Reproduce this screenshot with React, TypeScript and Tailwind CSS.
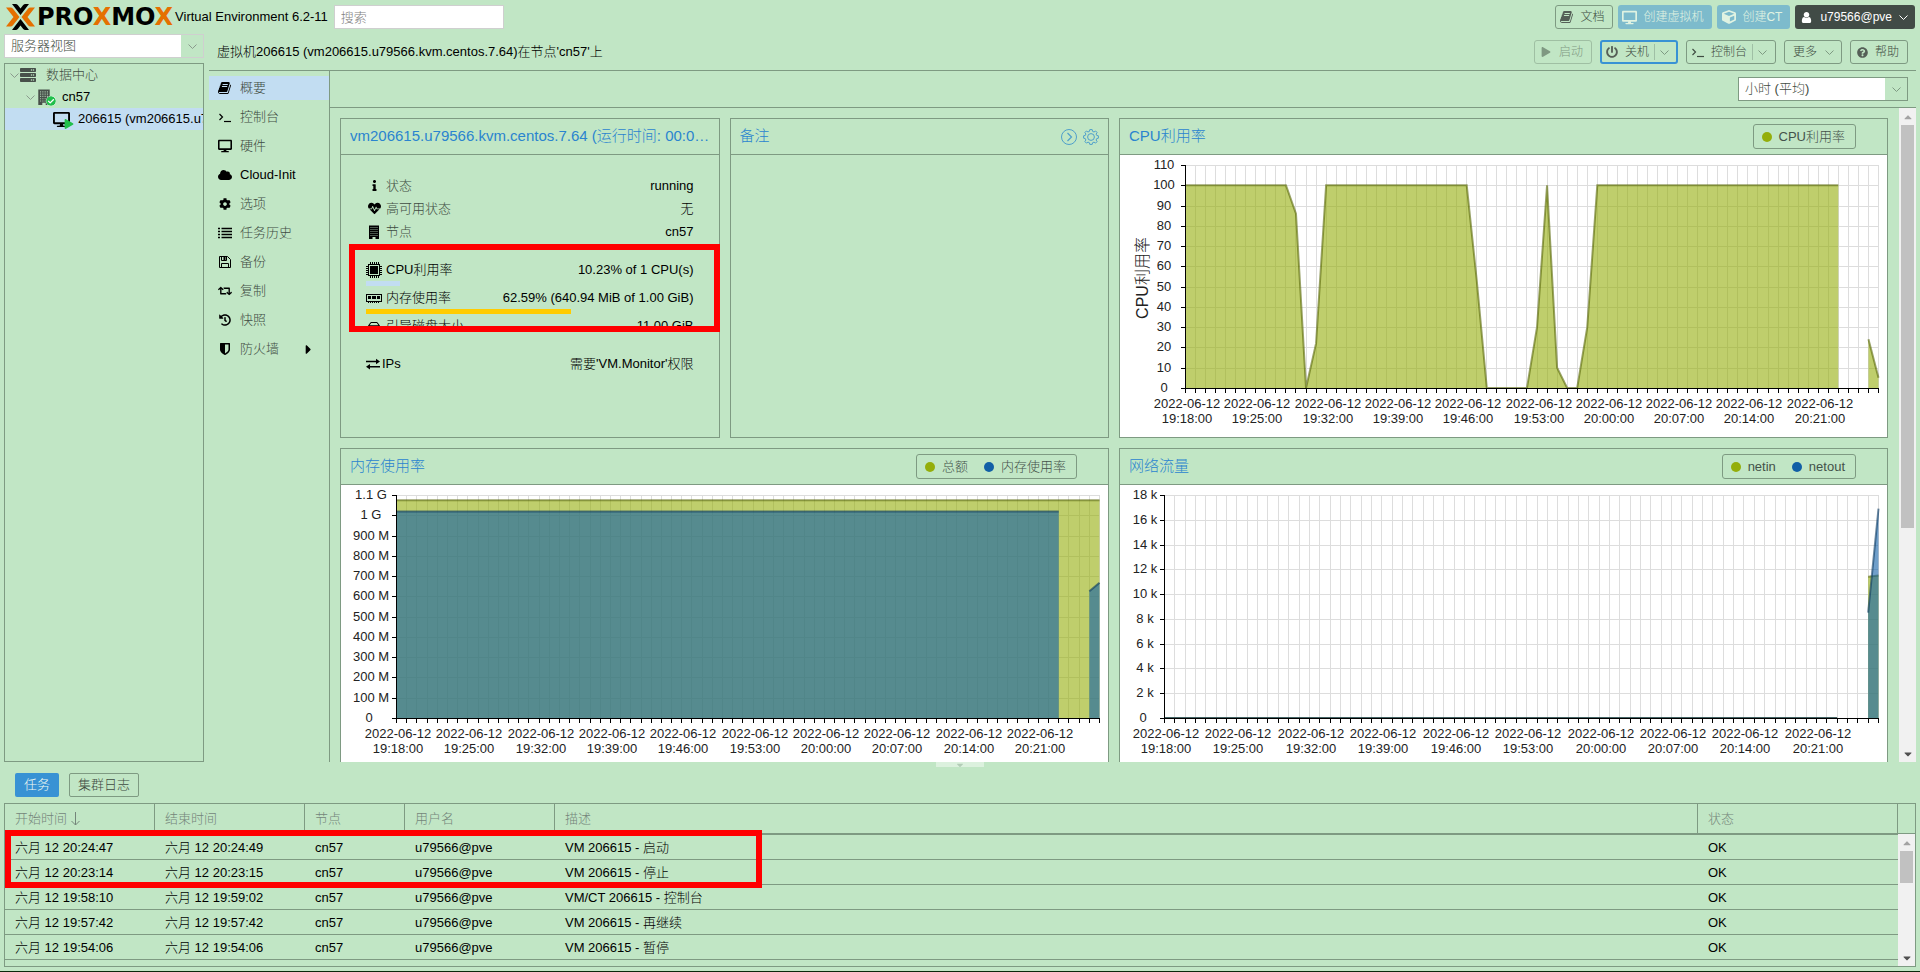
import React, { useLayoutEffect, useRef, useState } from "react";
import {
  FaCaretDown,
  FaCaretRight,
  FaCaretUp,
  FaCheckCircle,
  FaCloud,
  FaCog,
  FaCube,
  FaDesktop,
  FaHeartbeat,
  FaHistory,
  FaInfo,
  FaPlay,
  FaPowerOff,
  FaQuestionCircle,
  FaRegHdd,
  FaRetweet,
  FaServer,
} from "react-icons/fa";

/* ---------- small icons that the icon set lacks ---------- */

interface IconProps {
  size?: number;
  className?: string;
}

const BookIcon = ({ size = 14, className = "" }: IconProps) => (
  <svg className={className} width={size} height={size} viewBox="0 0 1792 1792" fill="currentColor">
    <path d="M1639 478q40 57 18 129l-275 906q-19 64-76.5 107.5t-122.5 43.5h-923q-77 0-148.5-53.5t-99.500-131.500q-24-67-2-127 0-4 3-27t4-37q1-8-3-21.500t-3-19.500q2-11 8-21t16.500-23.500 16.500-23.500q23-38 45-91.500t30-91.500q3-10 .5-30t-.5-28q3-11 17-28t17-23q21-36 42-92t25-90q1-9-2.500-32t.5-28q4-13 22-30.500t22-22.500q19-26 42.500-84.500t27.500-96.500q1-8-3-25.500t-2-26.500q2-8 9-18t18-23 17-21q8-12 16.500-30.500t15-35 16-36 19.500-32 26.500-23.500 36-11.500 47.500 5.500l-1 3q38-9 51-9h761q74 0 114 56t18 130l-274 906q-36 119-71.500 153.500t-128.500 34.500h-869q-27 0-38 15-11 16-1 43 24 70 144 70h923q29 0 56-15.500t35-41.500l300-987q7-22 5-57 38 15 59 43zm-1064 2q-4 13 2 22.500t20 9.500h608q13 0 25.500-9.500t16.500-22.500l21-64q4-13-2-22.500t-20-9.500h-608q-13 0-25.500 9.500t-16.500 22.500zm-83 256q-4 13 2 22.500t20 9.500h608q13 0 25.500-9.500t16.500-22.500l21-64q4-13-2-22.500t-20-9.500h-608q-13 0-25.500 9.500t-16.500 22.500z" />
  </svg>
);

const ShieldIcon = ({ size = 14 }: IconProps) => (
  <svg width={size} height={size} viewBox="0 0 1792 1792" fill="currentColor">
    <path d="M1344 960v-640h-448v1137q119-63 213-137 235-184 235-360zm192-768v768q0 86-33.5 170.5t-83 150-118 127.500-126.500 103-121 77.500-89.500 49.500-42.500 20q-12 6-26 6t-26-6q-16-7-42.500-20t-89.500-49.500-121-77.500-126.500-103-118-127.500-83-150-33.500-170.500v-768q0-26 19-45t45-19h1152q26 0 45 19t19 45z" />
  </svg>
);

const UserIcon = ({ size = 14 }: IconProps) => (
  <svg width={size} height={size} viewBox="192 0 1408 1792" fill="currentColor">
    <path d="M1536 1399q0 109-62.500 187t-150.500 78h-854q-88 0-150.500-78t-62.500-187q0-85 8.500-160.500t31.500-152 58.500-131 94-89 134.500-34.500q131 128 313 128t313-128q76 0 134.500 34.500t94 89 58.500 131 31.500 152 8.500 160.500zm-256-887q0 159-112.500 271.500t-271.500 112.500-271.500-112.500-112.500-271.500 112.500-271.500 271.500-112.500 271.500 112.500 112.500 271.500z" />
  </svg>
);

const BuildingIcon = ({ size = 14, className = "" }: IconProps) => (
  <svg className={className} width={size} height={size} viewBox="0 0 14 14">
    <path d="M2 0.500H12V14H8.500V12H5.500V14H2Z" fill="currentColor" />
    <path
      d="M3.500 2.500H10.500M3.500 4.500H10.500M3.500 6.500H10.500M3.500 8.500H10.500M3.500 10.500H10.500"
      stroke="#c1e6c5"
      strokeOpacity="0.75"
      strokeDasharray="1 1"
      fill="none"
    />
  </svg>
);

const ListIcon = () => (
  <svg width="14" height="12" viewBox="0 0 14 12" stroke="currentColor" strokeWidth="1.500">
    <path d="M0 1.500H2M0 4.500H2M0 7.500H2M0 10.500H2M3.500 1.500H14M3.500 4.500H14M3.500 7.500H14M3.500 10.500H14" />
  </svg>
);

const FloppyIcon = () => (
  <svg width="12" height="12" viewBox="0 0 12 12" fill="none" stroke="currentColor">
    <path d="M0.500 0.500H8.500L11.500 3.500V11.500H0.500Z" />
    <path d="M2.500 11.500V7.500H9.500V11.500M2.500 0.500V4.500H7.500V0.500" />
    <path d="M5.500 1V4" strokeWidth="2" />
  </svg>
);

const TerminalIcon = ({ className = "" }: IconProps) => (
  <svg className={className} width="14" height="14" viewBox="0 0 14 14" fill="none" stroke="currentColor">
    <path d="M1.500 4 L4.500 7 L1.500 10" strokeWidth="1.200" />
    <path d="M6 11.500 H13" strokeWidth="1.200" />
  </svg>
);

const ChevronIcon = ({ className = "" }: IconProps) => (
  <svg className={className} width="9" height="9" viewBox="0 0 9 9" fill="none" stroke="currentColor">
    <path d="M0.500 2.500 L4.500 6.500 L8.500 2.500" />
  </svg>
);

const CpuIcon = () => (
  <svg width="16" height="16" viewBox="0 0 16 16" fill="none" stroke="currentColor">
    <path d="M4.500 0V16M6.500 0V16M8.500 0V16M10.500 0V16M12.500 0V16M0 4.500H16M0 6.500H16M0 8.500H16M0 10.500H16M0 12.500H16" />
    <rect x="2.500" y="2.500" width="11" height="11" fill="#c1e6c5" />
    <rect x="4" y="4" width="8" height="8" fill="currentColor" stroke="none" />
  </svg>
);

const MemoryIcon = () => (
  <svg width="16" height="16" viewBox="0 0 16 16" fill="currentColor">
    <rect x="0.500" y="4.500" width="15" height="7" fill="none" stroke="currentColor" />
    <path d="M2 6h3v3H2zM6 6h4v3H6zM11 6h3v3h-3z" />
    <path d="M2.500 11v2M4.500 11v2M6.500 11v2M8.500 11v2M10.500 11v2M12.500 11v2" stroke="currentColor" />
  </svg>
);

const ExchangeIcon = () => (
  <svg width="14" height="14" viewBox="0 0 14 14" fill="currentColor">
    <path d="M0 3.700H10V1.800L14 4.500L10 7.200V5.300H0ZM14 8.900H4V7L0 9.700L4 12.400V10.500H14Z" />
  </svg>
);

const SortArrow = () => (
  <svg width="9" height="15" viewBox="0 0 9 15" fill="none" stroke="currentColor">
    <path d="M4.500 1V14M0.500 10L4.500 14L8.500 10" />
  </svg>
);

const ExpandTool = () => (
  <svg width="16" height="16" viewBox="0 0 16 16" fill="none" stroke="currentColor">
    <circle cx="8" cy="8" r="7.500" />
    <path d="M6.500 4L10.500 8L6.500 12" strokeWidth="1.200" />
  </svg>
);

const GearTool = () => (
  <svg width="16" height="16" viewBox="0 0 16 16" fill="none" stroke="currentColor">
    <path d="M6.800 0.600H9.200L9.600 2.400L11 3L12.600 2L14.100 3.500L13.100 5.100L13.700 6.400L15.400 6.800V9.200L13.700 9.600L13.100 11L14.100 12.600L12.600 14.100L11 13.100L9.600 13.700L9.200 15.400H6.800L6.400 13.700L5 13.100L3.400 14.100L1.900 12.600L2.900 11L2.300 9.600L0.600 9.200V6.800L2.300 6.400L2.900 5L1.900 3.500L3.400 2L5 3L6.400 2.400Z" />
    <circle cx="8" cy="8" r="3.400" />
  </svg>
);

const Logo = () => (
  <div className="flex items-center gap-[2px]">
    <svg width="29" height="26" viewBox="0 0 29 26">
      <path d="M0 3.500H4.500Q6 3.500 7 4.700L13.500 13L7 21.300Q6 22.500 4.500 22.500H0L7.500 13Z" fill="#e57000" />
      <path d="M29 3.500H24.500Q23 3.500 22 4.700L15.500 13L22 21.300Q23 22.500 24.500 22.500H29L21.500 13Z" fill="#e57000" />
      <path d="M6 0H9.500Q11 0 12 1.200L14.500 4.500L17 1.200Q18 0 19.500 0H23L14.500 11Z" fill="#000" />
      <path d="M6 26H9.500Q11 26 12 24.800L14.500 21.500L17 24.800Q18 26 19.500 26H23L14.500 15Z" fill="#000" />
    </svg>
    <span className="font-['DejaVu_Sans',sans-serif] text-[24px] leading-6 font-bold text-black">
      PRO<span className="text-[#e57000]">X</span>MO<span className="text-[#e57000]">X</span>
    </span>
  </div>
);

/* ---------- charts ---------- */

interface Series {
  name: string;
  fill: string;
  stroke: string;
  data: (number | null)[];
}

interface ChartProps {
  left: number;
  max: number;
  step: number;
  labelGap: number;
  format: (v: number) => string;
  title?: string;
  series: Series[];
}

const POINTS = 70;
const TIMES = ["19:18:00", "19:25:00", "19:32:00", "19:39:00", "19:46:00", "19:53:00", "20:00:00", "20:07:00", "20:14:00", "20:21:00"];

const Chart: React.FC<ChartProps> = ({ left, max, step, labelGap, format, title, series }) => {
  const box = useRef<HTMLDivElement>(null);
  const [width, setWidth] = useState(767);

  useLayoutEffect(() => {
    const el = box.current;
    if (!el) return;
    const update = () => setWidth(el.clientWidth);
    update();
    const observer = new ResizeObserver(update);
    observer.observe(el);
    return () => observer.disconnect();
  }, []);

  const top = 10;
  const bottom = 233;
  const right = width - 9;
  const px = (i: number) => left + ((right - left) * i) / (POINTS - 1);
  const py = (v: number) => bottom - ((bottom - top) * v) / max;
  const snap = (n: number) => Math.round(n) + 0.5;

  // split a series at its gaps
  const segments = (data: (number | null)[]) => {
    const out: string[][] = [];
    let run: string[] = [];
    data.forEach((v, i) => {
      if (v === null) {
        if (run.length) out.push(run);
        run = [];
      } else {
        run.push(`${px(i) + 0.5} ${py(v)}`);
      }
    });
    if (run.length) out.push(run);
    return out;
  };

  const xs = Array.from({ length: POINTS }, (_, i) => snap(px(i)));
  const values = Array.from({ length: Math.round(max / step) + 1 }, (_, i) => i * step);

  return (
    <div ref={box} className="bg-white h-full overflow-hidden">
      <svg width={width} height="280" className="block text-[13px]">
        <g stroke="#dddddd">
          {xs.map((x) => <line key={x} x1={x} x2={x} y1={top} y2={bottom} />)}
          {values.map((v) => <line key={v} x1={left} x2={right + 1} y1={snap(py(v))} y2={snap(py(v))} />)}
        </g>
        {series.map((s) => segments(s.data).map((seg, i) => {
          const first = seg[0].split(" ")[0];
          const last = seg[seg.length - 1].split(" ")[0];
          return (
            <g key={s.name + i}>
              <path d={`M${first} ${bottom + 0.5}L${seg.join("L")}L${last} ${bottom + 0.5}Z`} fill={s.fill} fillOpacity="0.6" />
              <path d={`M${seg.join("L")}`} fill="none" stroke={s.stroke} strokeOpacity="0.6" strokeWidth="2" />
            </g>
          );
        }))}
        <g stroke="#000">
          <line x1={left + 0.5} x2={left + 0.5} y1={top} y2={bottom + 5} />
          <line x1={left - 4} x2={right + 1} y1={bottom + 0.5} y2={bottom + 0.5} />
          {values.map((v) => <line key={v} x1={left - 4} x2={left} y1={snap(py(v))} y2={snap(py(v))} />)}
          {xs.map((x) => <line key={x} x1={x} x2={x} y1={bottom} y2={bottom + 5} />)}
        </g>
        <g fill="#222" textAnchor="middle">
          {values.map((v) => (
            <text key={v} x={left - labelGap} y={Math.round(py(v)) + 4} className="whitespace-pre">
              {format(v)}
            </text>
          ))}
          {TIMES.map((t, i) => (
            <React.Fragment key={t}>
              <text x={Math.round(px(i * 7)) + 2} y="253">2022-06-12</text>
              <text x={Math.round(px(i * 7)) + 2} y="268">{t}</text>
            </React.Fragment>
          ))}
          {title && <text transform="translate(28 123) rotate(-90)" className="text-[16px]">{title}</text>}
        </g>
      </svg>
    </div>
  );
};

const repeat = (n: number, v: number | null) => Array<number | null>(n).fill(v);
const GREEN = { fill: "#94ae0a", stroke: "#566606" };
const BLUE = { fill: "#115fa6", stroke: "#0a3861" };

const cpuSeries: Series[] = [
  { name: "CPU利用率", ...GREEN, data: [...repeat(11, 100), 86, 0, 22, ...repeat(15, 100), 53, ...repeat(5, 0), 30, 100, 10, 0, 0, 30, ...repeat(25, 100), null, null, 24, 5] },
];
const memSeries: Series[] = [
  { name: "总额", ...GREEN, data: repeat(70, 1074) },
  { name: "内存使用率", ...BLUE, data: [...repeat(66, 1018), null, null, 625, 667] },
];
const netSeries: Series[] = [
  { name: "netin", ...GREEN, data: [...repeat(66, 0), null, null, 11.4, 11.5] },
  { name: "netout", ...BLUE, data: [...repeat(66, 0), null, null, 8.5, 16.9] },
];

const memLabel = (v: number) => (v === 0 ? "0 " : v >= 1000 ? `${v / 1000} G` : `${v} M`);

/* ---------- panels ---------- */

const Legend = ({ series }: { series: Series[] }) => (
  <div className="flex items-center gap-4 h-[25px] mr-[25px] pl-2 pr-[10px] rounded-[3px] border border-[#7e9a82] text-[13px] text-[#44524a]">
    {series.map((s) => (
      <span key={s.name} className="flex items-center gap-[7px]">
        <span className="w-[10px] h-[10px] rounded-full" style={{ backgroundColor: s.fill }}></span>
        {s.name}
      </span>
    ))}
  </div>
);

interface PanelProps {
  title: string;
  className?: string;
  tools?: React.ReactNode;
  children?: React.ReactNode;
}

const Panel: React.FC<PanelProps> = ({ title, className = "", tools, children }) => (
  <section className={`flex flex-col min-w-0 h-[320px] border border-[#7e9a82] ${className}`}>
    <header className="flex shrink-0 items-center justify-between h-9 pl-[9px] pr-[6px] border-b border-[#7e9a82]">
      <h2 className="truncate text-[15px] text-[#2a84cf]">{title}</h2>
      {tools}
    </header>
    <div className="flex-1 min-h-0">{children}</div>
  </section>
);

interface InfoRowProps {
  icon: React.ReactNode;
  label: string;
  value: string;
}

const InfoRow: React.FC<InfoRowProps> = ({ icon, label, value }) => (
  <div className="flex items-center h-[23px]">
    <span className="flex justify-center w-4 mr-1">{icon}</span>
    <span>{label}</span>
    <span className="ml-auto text-black">{value}</span>
  </div>
);

const Bar = ({ percent, className }: { percent: number; className: string }) => (
  <div className="h-[5px]">
    <div className={`h-full ${className}`} style={{ width: `${percent}%` }}></div>
  </div>
);

const Scrollbar = ({ thumb }: { thumb: string }) => (
  <div className="flex flex-col w-[17px] shrink-0 h-full bg-[#f1f1f1] items-center">
    <div className="flex items-center justify-center h-[17px] text-[#a3a3a3]"><FaCaretUp size={12} /></div>
    <div className="flex-1 min-h-0 w-[13px]">
      <div className={`bg-[#c1c1c1] ${thumb}`}></div>
    </div>
    <div className="flex items-center justify-center h-[17px] text-[#505050]"><FaCaretDown size={12} /></div>
  </div>
);

/* ---------- data ---------- */

const menu = [
  { label: "概要", icon: <BookIcon size={14} /> },
  { label: "控制台", icon: <TerminalIcon /> },
  { label: "硬件", icon: <FaDesktop size={14} /> },
  { label: "Cloud-Init", icon: <FaCloud size={14} /> },
  { label: "选项", icon: <FaCog size={12} /> },
  { label: "任务历史", icon: <ListIcon /> },
  { label: "备份", icon: <FloppyIcon /> },
  { label: "复制", icon: <FaRetweet size={14} /> },
  { label: "快照", icon: <FaHistory size={12} /> },
  { label: "防火墙", icon: <ShieldIcon size={14} />, more: true },
];

const tasks = [
  ["六月 12 20:24:47", "六月 12 20:24:49", "VM 206615 - 启动"],
  ["六月 12 20:23:14", "六月 12 20:23:15", "VM 206615 - 停止"],
  ["六月 12 19:58:10", "六月 12 19:59:02", "VM/CT 206615 - 控制台"],
  ["六月 12 19:57:42", "六月 12 19:57:42", "VM 206615 - 再继续"],
  ["六月 12 19:54:06", "六月 12 19:54:06", "VM 206615 - 暂停"],
];

const toolButton = "flex items-center h-6 rounded-[3px] border border-[#7e9a82] text-[12px] text-[#3f4c42]";
const th = "h-[31px] px-[10px] border-b-2 border-r border-[#7e9a82] text-left font-light text-[#74857a]";

const App: React.FC = () => {
  const [active, setActive] = useState("概要");

  return (
    <div className="flex flex-col h-screen overflow-hidden bg-[#c1e6c5] text-[13px] text-[#3f4c42] font-light font-['Liberation_Sans','Noto_Sans_CJK_SC',sans-serif]">
      {/* Top bar */}
      <header className="flex shrink-0 items-center h-[34px] pl-[6px] pr-[5px]">
        <Logo />
        <span className="ml-[2px] text-black">Virtual Environment 6.2-11</span>
        <input
          type="text"
          aria-label="搜索"
          placeholder="搜索"
          className="ml-[6px] w-[170px] h-6 px-[6px] bg-white border border-[#cfcfcf] placeholder:text-[#808080]"
        />
        <div className="flex gap-[5px] ml-auto">
          <button className={`${toolButton} gap-[6px] pl-1 pr-2`}><BookIcon size={14} className="text-[#555f57]" />文档</button>
          <button className="flex items-center gap-[6px] h-6 pl-1 pr-[9px] rounded-[3px] bg-[#7dbbcc] text-[12px] text-[#e0f3e2]"><FaDesktop size={15} />创建虚拟机</button>
          <button className="flex items-center gap-[6px] h-6 pl-[5px] pr-2 rounded-[3px] bg-[#7dbbcc] text-[12px] text-[#e0f3e2]"><FaCube size={14} />创建CT</button>
          <button className="flex items-center gap-[7px] h-6 pl-[5px] pr-[7px] rounded-[3px] bg-[#414b46] text-[12px] font-normal text-white">
            <UserIcon size={13} />u79566@pve<ChevronIcon />
          </button>
        </div>
      </header>

      {/* Main area */}
      <main className="flex flex-1 min-h-0 gap-[5px] px-1">
        <aside className="flex flex-col w-[200px] shrink-0">
          <label className="flex h-6 shrink-0 mb-[5px] border border-[#cfcfcf]">
            <select aria-label="视图" className="flex-1 appearance-none bg-white px-[6px] outline-none">
              <option>服务器视图</option>
            </select>
            <span className="flex items-center justify-center w-[22px] text-[#8a9a8d]"><ChevronIcon /></span>
          </label>
          <nav className="flex-1 border border-[#7e9a82] overflow-hidden whitespace-nowrap">
            <div className="flex items-center h-[22px] pl-[5px]">
              <ChevronIcon className="text-[#8a9a8d]" />
              <FaServer size={16} className="ml-px mr-[10px] text-[#47504a]" />数据中心
            </div>
            <div className="flex items-center h-[22px] pl-[21px] text-black">
              <ChevronIcon className="text-[#8a9a8d]" />
              <span className="relative w-[20px] ml-px mr-[6px] h-4">
                <BuildingIcon size={16} className="text-[#47504a]" />
                <FaCheckCircle size={10} className="absolute right-0 bottom-[-1px] rounded-full bg-white text-[#21bf4b]" />
              </span>
              cn57
            </div>
            <div className="flex items-center h-[22px] pl-12 bg-[#c2ddf2] text-black">
              <span className="relative shrink-0 w-[21px] mr-1 h-4">
                <FaDesktop size={17} />
                <FaPlay size={10} className="absolute right-0 bottom-[-2px] text-[#21bf4b]" />
              </span>
              <span className="flex-1 min-w-0 overflow-hidden">206615 (vm206615.u79566.kvm.centos.7.64)</span>
            </div>
          </nav>
        </aside>

        <div className="flex flex-col flex-1 min-w-0">
          <div className="flex shrink-0 items-center h-[37px] pl-2 pr-2 border-b border-[#7e9a82]">
            <h1 className="text-black">虚拟机206615 (vm206615.u79566.kvm.centos.7.64)在节点'cn57'上</h1>
            <div className="flex gap-2 ml-auto">
              <button disabled className={`${toolButton} gap-2 pl-[6px] pr-2 opacity-50`}><FaPlay size={10} />启动</button>
              <button className="flex items-center h-6 pl-1 pr-[7px] rounded-[3px] border-2 border-[#3892d4] text-[12px]">
                <FaPowerOff size={12} className="mr-[7px] text-[#555f57]" />关机
                <span className="w-px h-4 mx-[5px] bg-[#9fbfa5]"></span><ChevronIcon className="text-[#7e9a82]" />
              </button>
              <button className={`${toolButton} pl-1 pr-2`}>
                <TerminalIcon className="mr-[6px]" />控制台
                <span className="w-px h-4 mx-[5px] bg-[#9fbfa5]"></span><ChevronIcon className="text-[#7e9a82]" />
              </button>
              <button className={`${toolButton} gap-2 pl-2 pr-[7px]`}>更多<ChevronIcon className="text-[#7e9a82]" /></button>
              <button className={`${toolButton} gap-[7px] pl-[6px] pr-2`}><FaQuestionCircle size={11} className="text-[#555f57]" />帮助</button>
            </div>
          </div>

          <div className="flex flex-1 min-h-0">
            <nav className="flex flex-col gap-[5px] w-[121px] shrink-0 pt-[5px] border-r border-[#7e9a82]">
              {menu.map((item) => (
                <button
                  key={item.label}
                  onClick={() => setActive(item.label)}
                  className={`flex items-center h-6 pl-[9px] ${active === item.label ? "bg-[#c2ddf2]" : ""}`}
                >
                  <span className="flex justify-center w-[14px] mr-2 text-black">{item.icon}</span>
                  <span className={item.label === "Cloud-Init" ? "text-black" : ""}>{item.label}</span>
                  {item.more && <FaCaretRight size={15} className="ml-auto mr-[13px] text-black" />}
                </button>
              ))}
            </nav>

            <div className="flex flex-col flex-1 min-w-0">
              <div className="flex shrink-0 items-center justify-end h-[37px] pr-2 border-b border-[#7e9a82]">
                <label className="flex w-[170px] h-6 border border-[#7e9a82]">
                  <select aria-label="时间范围" className="flex-1 appearance-none bg-white px-[6px] outline-none">
                    <option>小时 (平均)</option>
                  </select>
                  <span className="flex items-center justify-center w-[22px] text-[#7e9a82]"><ChevronIcon /></span>
                </label>
              </div>

              <div className="flex flex-1 min-h-0">
                <div className="flex-1 min-w-0 overflow-hidden pt-[10px] pl-[10px] pr-[11px]">
                  <div className="grid grid-cols-4 gap-[10px]">
                    <div className="relative">
                      <Panel title="vm206615.u79566.kvm.centos.7.64 (运行时间: 00:02:18)">
                        <div className="px-[25px] pt-[19px]">
                          <InfoRow icon={<FaInfo size={11} className="text-black" />} label="状态" value="running" />
                          <InfoRow icon={<FaHeartbeat size={13} className="text-black" />} label="高可用状态" value="无" />
                          <InfoRow icon={<BuildingIcon size={14} className="text-black" />} label="节点" value="cn57" />
                          <div className="mt-[15px] text-black">
                            <InfoRow icon={<CpuIcon />} label="CPU利用率" value="10.23% of 1 CPU(s)" />
                            <Bar percent={10.23} className="bg-[#c2ddf2]" />
                            <InfoRow icon={<MemoryIcon />} label="内存使用率" value="62.59% (640.94 MiB of 1.00 GiB)" />
                            <Bar percent={62.59} className="bg-[#ffcc00]" />
                            <InfoRow icon={<FaRegHdd size={12} />} label="引导磁盘大小" value="11.00 GiB" />
                          </div>
                          <div className="flex items-center gap-[2px] h-[23px] mt-[15px] text-black">
                            <ExchangeIcon />
                            <span>IPs</span>
                            <span className="ml-auto">需要'VM.Monitor'权限</span>
                          </div>
                        </div>
                      </Panel>
                      {/* Highlight over CPU and memory usage */}
                      <div className="absolute left-[9px] right-0 top-[126px] h-[88px] border-6 border-[#ff0000]"></div>
                    </div>
                    <Panel title="备注" tools={
                      <div className="flex gap-[6px] mr-[3px] text-[#4f9fcb]">
                        <button aria-label="展开"><ExpandTool /></button>
                        <button aria-label="设置"><GearTool /></button>
                      </div>
                    } />
                    <Panel title="CPU利用率" className="col-span-2" tools={<Legend series={cpuSeries} />}>
                      <Chart left={65} labelGap={21} max={110} step={10} format={(v) => `${v}`} title="CPU利用率" series={cpuSeries} />
                    </Panel>
                    <Panel title="内存使用率" className="col-span-2" tools={<Legend series={memSeries} />}>
                      <Chart left={55} labelGap={25} max={1100} step={100} format={memLabel} series={memSeries} />
                    </Panel>
                    <Panel title="网络流量" className="col-span-2" tools={<Legend series={netSeries} />}>
                      <Chart left={44} labelGap={19} max={18} step={2} format={(v) => (v === 0 ? "0 " : `${v} k`)} series={netSeries} />
                    </Panel>
                  </div>
                </div>
                <Scrollbar thumb="h-[65%]" />
              </div>
            </div>
          </div>
        </div>
      </main>

      {/* Splitter */}
      <div className="flex justify-center h-[5px] shrink-0">
        <div className="flex items-center justify-center w-12 overflow-hidden bg-[#dcf1de] text-[#b3cdb7]"><FaCaretDown size={10} /></div>
      </div>

      {/* Task log */}
      <footer className="shrink-0 px-1 pb-1 border-b border-[#0a2a0c]">
        <div className="flex items-center gap-[10px] h-9 pl-[11px]">
          <button className="h-6 px-[9px] rounded-[2px] bg-[#3892d4] text-[#f2faf2]">任务</button>
          <button className="h-6 px-2 rounded-[2px] border border-[#7e9a82]">集群日志</button>
        </div>
        <div className="relative flex h-[164px] border border-[#7e9a82]">
          <table className="flex-1 w-full table-fixed border-separate border-spacing-0 self-start text-black">
            <thead>
              <tr>
                <th className={`${th} w-[150px]`}><span className="flex items-center gap-1">开始时间<SortArrow /></span></th>
                <th className={`${th} w-[150px]`}>结束时间</th>
                <th className={`${th} w-[100px]`}>节点</th>
                <th className={`${th} w-[150px]`}>用户名</th>
                <th className={th}>描述</th>
                <th className={`${th} w-[200px]`}>状态</th>
              </tr>
            </thead>
            <tbody>
              {tasks.map(([start, end, text]) => (
                <tr key={start}>
                  {[start, end, "cn57", "u79566@pve", text, "OK"].map((cell, i) => (
                    <td key={i} className="h-[25px] px-[10px] pt-[2px] leading-5 border-b border-[#7e9a82]">{cell}</td>
                  ))}
                </tr>
              ))}
            </tbody>
          </table>
          <div className="flex flex-col w-[17px] shrink-0">
            <div className="h-[30px] shrink-0 border-b border-[#7e9a82]"></div>
            <div className="flex-1 min-h-0"><Scrollbar thumb="h-8" /></div>
          </div>
          {/* Highlight over the two latest tasks */}
          <div className="absolute left-0 top-[26px] w-[757px] h-[58px] border-6 border-[#ff0000]"></div>
        </div>
      </footer>
    </div>
  );
};

export default App;
